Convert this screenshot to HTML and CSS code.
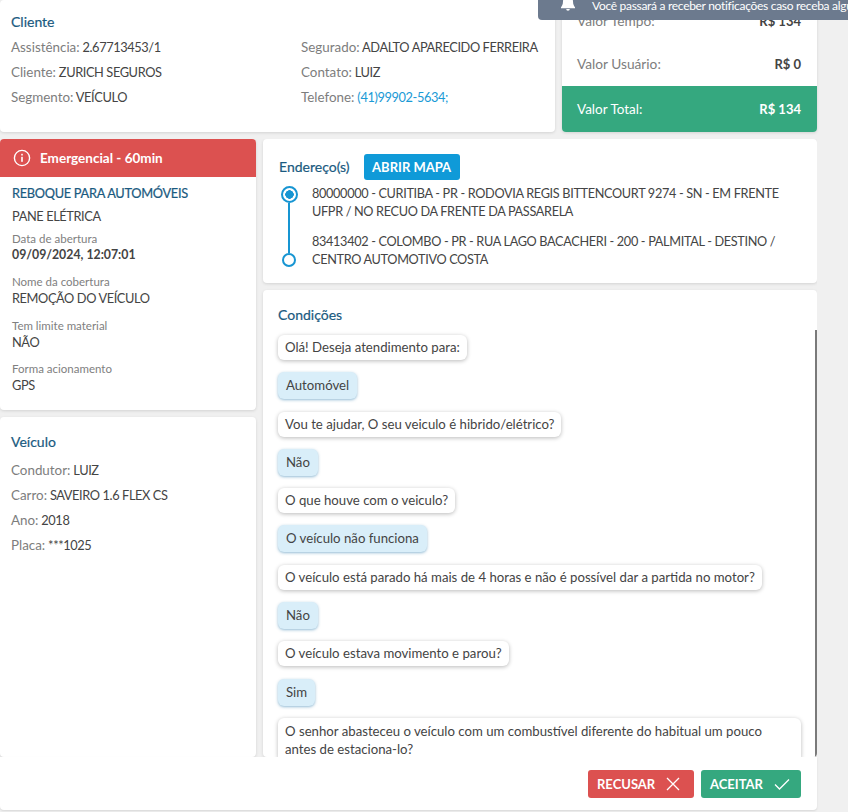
FILE: index.html
```html
<!DOCTYPE html>
<html lang="pt-BR">
<head>
<meta charset="utf-8">
<title>Assistência</title>
<link rel="stylesheet" href="styles.css">
</head>
<body>
<div class="toast">
  <svg class="toast-bell" viewBox="0 0 16 16" width="16" height="16"><path fill="#fff" d="M8 0a1.2 1.2 0 0 0-1.2 1.2v.5A5 5 0 0 0 3 6.6c0 3.6-1.4 4.8-2 5.6v1h14v-1c-.6-.8-2-2-2-5.6a5 5 0 0 0-3.8-4.9v-.5A1.2 1.2 0 0 0 8 0zM6.2 14a1.8 1.8 0 0 0 3.6 0z"/></svg>
  <span>Você passará a receber notificações caso receba algum novo acionamento</span>
</div>
<div class="app">
  <div class="top-row">
    <section class="card client">
      <h2 class="title">Cliente</h2>
      <div class="client-grid">
        <div class="stack">
          <p class="line"><span class="muted">Assistência:</span> 2.67713453/1</p>
          <p class="line"><span class="muted">Cliente:</span> ZURICH SEGUROS</p>
          <p class="line"><span class="muted">Segmento:</span> VEÍCULO</p>
        </div>
        <div class="stack">
          <p class="line"><span class="muted">Segurado:</span> ADALTO APARECIDO FERREIRA</p>
          <p class="line"><span class="muted">Contato:</span> LUIZ</p>
          <p class="line"><span class="muted">Telefone:</span> <a class="phone">(41)99902-5634;</a></p>
        </div>
      </div>
    </section>
    <section class="card values">
      <div class="value-list">
        <div class="value-row"><span class="muted">Valor Tempo:</span><strong>R$ 134</strong></div>
        <div class="value-row"><span class="muted">Valor Usuário:</span><strong>R$ 0</strong></div>
      </div>
      <div class="value-total"><span>Valor Total:</span><strong>R$ 134</strong></div>
    </section>
  </div>
  <div class="main-row">
    <div class="left-col">
      <section class="card service">
        <div class="urgency">
          <svg viewBox="0 0 18 18" width="18" height="18"><circle cx="9" cy="9" r="7.6" fill="none" stroke="#fff" stroke-width="1.4"/><rect x="8.2" y="7.8" width="1.6" height="5" fill="#fff"/><rect x="8.2" y="4.8" width="1.6" height="1.7" fill="#fff"/></svg>
          <span>Emergencial - 60min</span>
        </div>
        <div class="service-body">
          <h3 class="service-name">REBOQUE PARA AUTOMÓVEIS</h3>
          <p class="service-issue">PANE ELÉTRICA</p>
          <div class="field"><span class="label">Data de abertura</span><span class="val strong">09/09/2024, 12:07:01</span></div>
          <div class="field"><span class="label">Nome da cobertura</span><span class="val">REMOÇÃO DO VEÍCULO</span></div>
          <div class="field"><span class="label">Tem limite material</span><span class="val">NÃO</span></div>
          <div class="field"><span class="label">Forma acionamento</span><span class="val">GPS</span></div>
        </div>
      </section>
      <section class="card vehicle">
        <h2 class="title">Veículo</h2>
        <div class="stack">
          <p class="line"><span class="muted">Condutor:</span> LUIZ</p>
          <p class="line"><span class="muted">Carro:</span> SAVEIRO 1.6 FLEX CS</p>
          <p class="line"><span class="muted">Ano:</span> 2018</p>
          <p class="line"><span class="muted">Placa:</span> ***1025</p>
        </div>
      </section>
    </div>
    <div class="right-col">
      <section class="card address">
        <div class="address-head">
          <h2 class="title">Endereço(s)</h2>
          <button class="map-btn">ABRIR MAPA</button>
        </div>
        <div class="route">
          <div class="route-track">
            <span class="dot dot-active"></span>
            <span class="track-line"></span>
            <span class="dot"></span>
          </div>
          <div class="route-stops">
            <p>80000000 - CURITIBA - PR - RODOVIA REGIS BITTENCOURT 9274 - SN - EM FRENTE UFPR / NO RECUO DA FRENTE DA PASSARELA</p>
            <p>83413402 - COLOMBO - PR - RUA LAGO BACACHERI - 200 - PALMITAL - DESTINO / CENTRO AUTOMOTIVO COSTA</p>
          </div>
        </div>
      </section>
      <section class="card conditions">
        <h2 class="title">Condições</h2>
        <div class="chat">
          <div class="bubble">Olá! Deseja atendimento para:</div>
          <div class="bubble answer">Automóvel</div>
          <div class="bubble">Vou te ajudar, O seu veiculo é hibrido/elétrico?</div>
          <div class="bubble answer">Não</div>
          <div class="bubble">O que houve com o veiculo?</div>
          <div class="bubble answer">O veículo não funciona</div>
          <div class="bubble">O veículo está parado há mais de 4 horas e não é possível dar a partida no motor?</div>
          <div class="bubble answer">Não</div>
          <div class="bubble">O veículo estava movimento e parou?</div>
          <div class="bubble answer">Sim</div>
          <div class="bubble bubble-long">O senhor abasteceu o veículo com um combustível diferente do habitual um pouco antes de estaciona-lo?</div>
        </div>
      </section>
    </div>
  </div>
  <footer class="actions">
    <button class="action refuse">RECUSAR
      <svg viewBox="0 0 14 14" width="14" height="14"><path d="M1 1l12 12M13 1L1 13" stroke="#fff" stroke-width="1.3" fill="none"/></svg>
    </button>
    <button class="action accept">ACEITAR
      <svg viewBox="0 0 16 12" width="16" height="12"><path d="M1 6.5l4.5 4.5L15 1.5" stroke="#fff" stroke-width="1.3" fill="none"/></svg>
    </button>
  </footer>
</div>
</body>
</html>
```
FILE: styles.css
```css
* { box-sizing: border-box; }
html, body { margin: 0; height: 100%; overflow: hidden; }
body {
  background: #f0f0f0;
  font-family: "Lato", "Noto Sans", sans-serif;
  font-size: 13px;
  color: #444;
}
p, h2, h3 { margin: 0; font-weight: 400; }

.toast {
  position: absolute;
  top: -10px;
  left: 538px;
  width: 340px;
  height: 30px;
  background: #6c7a8e;
  border-radius: 4px;
  color: #fff;
  font-size: 12px;
  letter-spacing: -.3px;
  display: flex;
  align-items: center;
  gap: 16px;
  padding-left: 22px;
  white-space: nowrap;
  overflow: hidden;
  z-index: 5;
}
.toast-bell { flex: none; margin-top: -5px; }

.app { width: 817px; height: 810px; display: flex; flex-direction: column; }

.card { background: #fff; border-radius: 4px; box-shadow: 0 1px 3px rgba(0,0,0,.12); }
.title { color: #1a5a80; font-size: 14px; line-height: 18px; -webkit-text-stroke: .2px #1a5a80; }
.muted { color: #7d7d7d; font-size: 13.4px; letter-spacing: 0; }

.top-row { display: flex; gap: 7px; height: 132px; flex: none; }
.client { width: 555px; padding: 13px 11px 0; }
.client-grid { display: grid; grid-template-columns: 290px 1fr; margin-top: 7px; }
.stack { display: flex; flex-direction: column; gap: 7px; }
.line { line-height: 18px; white-space: nowrap; font-size: 12.8px; letter-spacing: -.4px; }
.phone { color: #1a9ad6; }

.values { flex: 1; display: flex; flex-direction: column; overflow: hidden; }
.value-list { flex: 1; padding: 12px 16px 0 15px; display: flex; flex-direction: column; gap: 25px; }
.value-row { display: flex; justify-content: space-between; line-height: 18px; }
.value-row .muted { font-size: 13.7px; }
.value-row strong, .value-total strong { font-weight: 700; }
.value-total {
  height: 46px; background: #35a87f; color: #fff; font-size: 13.5px;
  display: flex; justify-content: space-between; align-items: center;
  padding: 0 16px 0 15px;
}
.value-total strong { font-size: 13px; }

.main-row { display: flex; gap: 7px; margin-top: 7px; height: 618px; flex: none; overflow: hidden; }
.left-col { width: 256px; flex: none; display: flex; flex-direction: column; gap: 7px; }
.service { height: 271px; overflow: hidden; }
.urgency {
  height: 38px; background: #dc5150; color: #fff; font-weight: 700; font-size: 13.5px;
  display: flex; align-items: center; gap: 9px; padding-left: 13px;
}
.service-body { padding: 7px 12px 0; }
.service-name { color: #1a5a80; font-size: 12.8px; letter-spacing: -.3px; line-height: 18px; -webkit-text-stroke: .2px #1a5a80; }
.service-issue { line-height: 18px; margin-top: 5px; font-size: 12.8px; letter-spacing: -.4px; }
.field { display: flex; flex-direction: column; margin-top: 6px; }
.field + .field { margin-top: 10.3px; }
.label { color: #808080; font-size: 11.5px; line-height: 15px; }
.val { line-height: 18px; font-size: 12.8px; letter-spacing: -.4px; }
.val.strong { font-weight: 700; font-size: 12.3px; letter-spacing: 0; }

.vehicle { flex: 1; padding: 16px 11px 0; }
.vehicle .title { margin-bottom: 10px; }

.right-col { flex: 1; display: flex; flex-direction: column; gap: 7px; min-width: 0; }
.address { height: 144px; padding: 15px 16px 0; flex: none; }
.address-head { display: flex; align-items: center; gap: 14px; height: 26px; }
.map-btn {
  height: 26px; width: 96px; padding: 0; border: 0; border-radius: 3px;
  background: #0f9ad8; color: #fff; font: 700 13px "Lato", sans-serif;
}
.route { display: flex; gap: 13px; margin-top: 4px; }
.route-track { width: 20px; display: flex; flex-direction: column; align-items: center; padding-top: 1.5px; }
.dot { width: 14px; height: 14px; border: 2px solid #1795d2; border-radius: 50%; background: #fff; flex: none; }
.dot-active { width: 17px; height: 17px; background: radial-gradient(circle, #1795d2 0 4px, #fff 4.5px); }
.track-line { width: 2px; height: 50px; background: #1795d2; }
.route-stops { flex: 1; display: flex; flex-direction: column; gap: 12px; font-size: 12.7px; letter-spacing: -.33px; }
.route-stops p { line-height: 18px; }

.conditions { flex: 1; padding: 16px 16px 0 15px; position: relative; overflow: hidden; }
.conditions::after {
  content: ""; position: absolute; right: 0; top: 40px; bottom: 0; width: 2px; background: #7a7a7a;
}
.chat { display: flex; flex-direction: column; align-items: flex-start; gap: 12.3px; margin-top: 11px; font-size: 13.2px; }
.bubble {
  background: #fff; border-radius: 6px; padding: 4px 7px; line-height: 17px;
  box-shadow: 0 1px 4px rgba(0,0,0,.28);
}
.bubble-long { align-self: stretch; padding-right: 34px; line-height: 18px; }
.answer { background: #d9eef9; padding: 5px 8px; box-shadow: 0 1px 3px rgba(40,120,170,.5); }

.actions {
  height: 53px; flex: none; background: #fff; border-radius: 0 0 4px 4px;
  display: flex; justify-content: flex-end; align-items: center; gap: 7px; padding-right: 16px;
  box-shadow: 0 1px 2px rgba(0,0,0,.1);
}
.action {
  height: 28px; border: 0; border-radius: 3px; color: #fff;
  font: 700 13px "Lato", sans-serif;
  display: flex; align-items: center; padding: 0 9px;
}
.refuse { width: 106px; background: #dc5150; gap: 11px; }
.accept { width: 100px; background: #35a87f; gap: 11px; }
```
